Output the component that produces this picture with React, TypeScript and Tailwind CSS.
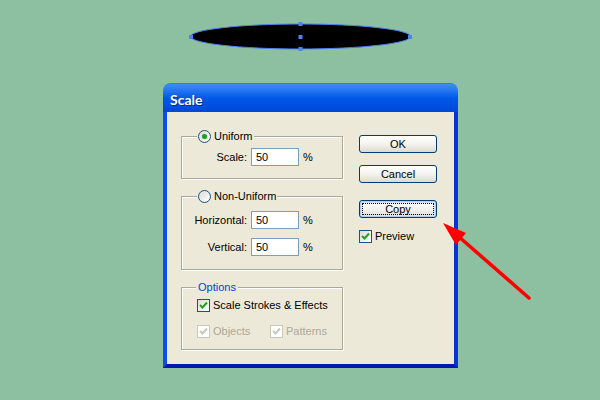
import React from 'react';

const Radio: React.FC<{ checked?: boolean }> = ({ checked }) => (
  <span className="w-[13px] h-[13px] rounded-full border border-[#1c5180] bg-linear-to-br from-[#dcdcd7] to-white flex items-center justify-center shrink-0">
    {checked && <span className="w-[5px] h-[5px] rounded-full bg-[#21a121] shadow-[0_0_1px_#5fd35f]" />}
  </span>
);

const Check: React.FC<{ disabled?: boolean }> = ({ disabled }) => (
  <span
    className={
      'w-[13px] h-[13px] border flex items-center justify-center shrink-0 ' +
      (disabled ? 'border-[#cac8bb] bg-white' : 'border-[#1c5180] bg-linear-to-br from-[#dcdcd7] to-white')
    }
  >
    <svg width="9" height="9" viewBox="0 0 9 9">
      <polyline
        points="1,4 3.5,6.5 8,1.5"
        fill="none"
        stroke={disabled ? '#cac8bb' : '#21a121'}
        strokeWidth="2"
      />
    </svg>
  </span>
);

const Field: React.FC<{ label: string; className?: string }> = ({ label, className }) => (
  <div className={'flex items-center h-[18px] ' + (className ?? '')}>
    <span className="w-[65px] text-right">{label}</span>
    <span className="ml-[4px] w-[48px] h-[18px] border border-[#7f9db9] bg-white pl-[4px] flex items-center">50</span>
    <span className="ml-[4px]">%</span>
  </div>
);

const Button: React.FC<{ label: string; focused?: boolean; className?: string }> = ({ label, focused, className }) => (
  <button
    className={
      'w-[78px] h-[18px] rounded-[3px] border border-[#003c74] bg-linear-to-b from-white via-[#f4f3ee] to-[#dedbcf] flex items-center justify-center text-[11px] text-black ' +
      (focused
        ? 'shadow-[inset_0_0_0_1px_#b6cdf2,inset_0_0_0_2px_#d8e4f8] outline outline-1 outline-dotted outline-black outline-offset-[-4px] '
        : '') +
      (className ?? '')
    }
  >
    {label}
  </button>
);

export default function App() {
  return (
    <div className="relative w-[600px] h-[400px] bg-[#8dbfa1] overflow-hidden font-['Liberation_Sans',Arial,sans-serif] text-[11px] text-black">
      {/* selected ellipse with handles */}
      <svg width="600" height="60" className="block">
        <ellipse cx="300.5" cy="36.5" rx="110" ry="12.5" fill="#000" stroke="#4f82f3" strokeWidth="1" />
        <rect x="298.5" y="22" width="4" height="4" fill="#4f82f3" />
        <rect x="298.5" y="35" width="4" height="4" fill="#4f82f3" />
        <rect x="298.5" y="47" width="4" height="4" fill="#4f82f3" />
        <rect x="189" y="35" width="4" height="4" fill="#4f82f3" />
        <rect x="408" y="35" width="4" height="4" fill="#4f82f3" />
      </svg>

      {/* Scale dialog */}
      <div className="mt-[23px] ml-[163px] w-[295px] h-[285px] flex flex-col">
        <div className="h-[29px] rounded-t-[8px] bg-linear-to-b from-[#3d8ef8] via-[#0058e8] to-[#0048d6] border-t border-[#2a7af0] flex items-center pl-[7px] pt-[2px]">
          <span className="font-['Lato',sans-serif] font-bold text-[14px] text-white [text-shadow:1px_1px_0_#0a2a8a]">Scale</span>
        </div>
        <div className="flex-1 flex bg-[#ece9d8] border-l-4 border-r-4 border-b-4 border-l-[#0a50e8] border-r-[#0834d6] border-b-[#0019a8]">
          {/* left column */}
          <div className="ml-[14px] mt-[24px] w-[162px] flex flex-col">
            <div className="h-[43px] border border-[#aca899] shadow-[inset_1px_1px_0_#fff,1px_1px_0_#fff]">
              <div className="-mt-[7px] ml-[15px] px-[1px] w-fit bg-[#ece9d8] flex items-center gap-[3px] h-[13px]">
                <Radio checked />
                <span>Uniform</span>
              </div>
              <Field label="Scale:" className="mt-[5px]" />
            </div>

            <div className="mt-[17px] h-[74px] border border-[#aca899] shadow-[inset_1px_1px_0_#fff,1px_1px_0_#fff]">
              <div className="-mt-[7px] ml-[15px] px-[1px] w-fit bg-[#ece9d8] flex items-center gap-[3px] h-[13px]">
                <Radio />
                <span>Non-Uniform</span>
              </div>
              <Field label="Horizontal:" className="mt-[8px]" />
              <Field label="Vertical:" className="mt-[9px]" />
            </div>

            <div className="mt-[17px] h-[63px] border border-[#aca899] shadow-[inset_1px_1px_0_#fff,1px_1px_0_#fff]">
              <div className="-mt-[7px] ml-[14px] px-[2px] w-fit bg-[#ece9d8] h-[13px] leading-[13px] text-[#0046d5]">
                Options
              </div>
              <div className="mt-[5px] ml-[15px] flex items-center gap-[3px] h-[13px]">
                <Check />
                <span>Scale Strokes &amp; Effects</span>
              </div>
              <div className="mt-[13px] ml-[15px] flex items-center h-[13px] text-[#aca899]">
                <div className="w-[73px] flex items-center gap-[3px]">
                  <Check disabled />
                  <span>Objects</span>
                </div>
                <div className="flex items-center gap-[3px]">
                  <Check disabled />
                  <span>Patterns</span>
                </div>
              </div>
            </div>
          </div>

          {/* right column */}
          <div className="ml-[16px] mt-[23px] flex flex-col">
            <Button label="OK" />
            <Button label="Cancel" className="mt-[12px]" />
            <Button label="Copy" focused className="mt-[17px]" />
            <div className="mt-[12px] flex items-center gap-[3px] h-[13px]">
              <Check />
              <span>Preview</span>
            </div>
          </div>
        </div>
      </div>

      {/* red pointer arrow over everything */}
      <svg width="600" height="400" className="absolute inset-0 pointer-events-none">
        <line x1="529" y1="298" x2="458" y2="236" stroke="#ff0000" strokeWidth="3.5" strokeLinecap="round" />
        <polygon points="443,223 466,233 456,245" fill="#ff0000" />
      </svg>
    </div>
  );
}
